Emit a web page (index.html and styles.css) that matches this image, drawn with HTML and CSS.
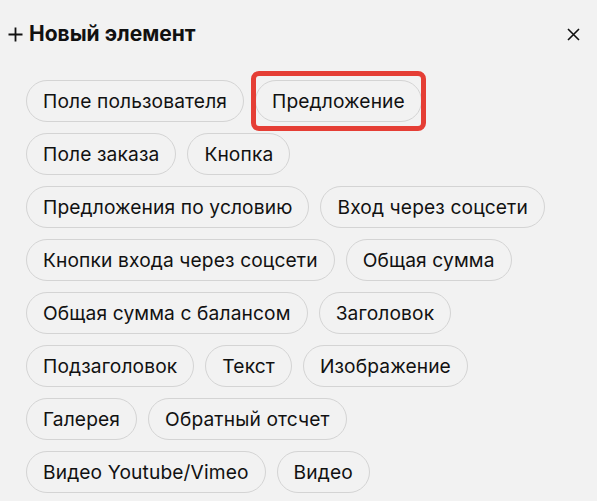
FILE: index.html
```html
<!DOCTYPE html>
<html lang="ru">
<head>
<meta charset="utf-8">
<title>Новый элемент</title>
<link rel="stylesheet" href="styles.css">
</head>
<body>
<div class="panel">
  <div class="header">
    <div class="title">
      <svg class="plus" width="15" height="15" viewBox="0 0 15 15" aria-hidden="true"><path d="M7.5 0.5v14M0.5 7.5h14" stroke="#111" stroke-width="1.8" fill="none"/></svg>
      <span>Новый элемент</span>
    </div>
    <button class="close" aria-label="Закрыть">
      <svg width="13" height="13" viewBox="0 0 13 13" aria-hidden="true"><path d="M1 1L12 12M12 1L1 12" stroke="#111" stroke-width="1.6" fill="none"/></svg>
    </button>
  </div>
  <div class="chips">
    <span class="chip">Поле пользователя</span>
    <span class="chip highlighted">Предложение</span>
    <span class="chip">Поле заказа</span>
    <span class="chip">Кнопка</span>
    <span class="chip">Предложения по условию</span>
    <span class="chip">Вход через соцсети</span>
    <span class="chip">Кнопки входа через соцсети</span>
    <span class="chip">Общая сумма</span>
    <span class="chip">Общая сумма с балансом</span>
    <span class="chip">Заголовок</span>
    <span class="chip">Подзаголовок</span>
    <span class="chip">Текст</span>
    <span class="chip">Изображение</span>
    <span class="chip">Галерея</span>
    <span class="chip">Обратный отсчет</span>
    <span class="chip">Видео Youtube/Vimeo</span>
    <span class="chip">Видео</span>
  </div>
</div>
</body>
</html>
```
FILE: styles.css
```css
html, body {
  margin: 0;
  padding: 0;
  background: #f2f2f2;
}
body {
  font-family: "Inter", "Noto Sans", sans-serif;
  color: #111;
  overflow: hidden;
}
.panel {
  padding: 20px 17px 0 8px;
}
.header {
  display: flex;
  align-items: center;
  justify-content: space-between;
  height: 28px;
}
.title {
  display: flex;
  align-items: center;
  gap: 6px;
  font-size: 21px;
  font-weight: 700;
  line-height: 28px;
}
.plus {
  display: block;
  margin-top: 1px;
}
.close {
  border: 0;
  background: none;
  padding: 0;
  width: 13px;
  height: 13px;
  display: block;
}
.close svg {
  display: block;
}
.chips {
  display: flex;
  flex-wrap: wrap;
  gap: 11px 11px;
  margin-top: 32px;
  padding: 0 9px 0 18px;
}
.chip {
  position: relative;
  display: inline-block;
  box-sizing: border-box;
  height: 42px;
  padding: 0 16px;
  border: 1px solid #d4d4d4;
  border-radius: 21px;
  font-size: 19.2px;
  font-weight: 400;
  letter-spacing: 0.12px;
  line-height: 40px;
  white-space: nowrap;
  color: #111;
}
.chip.highlighted::after {
  content: "";
  position: absolute;
  top: -10px;
  bottom: -10px;
  left: -5px;
  right: -5px;
  border: 5px solid #e53e35;
  border-radius: 8px;
  pointer-events: none;
}
```
